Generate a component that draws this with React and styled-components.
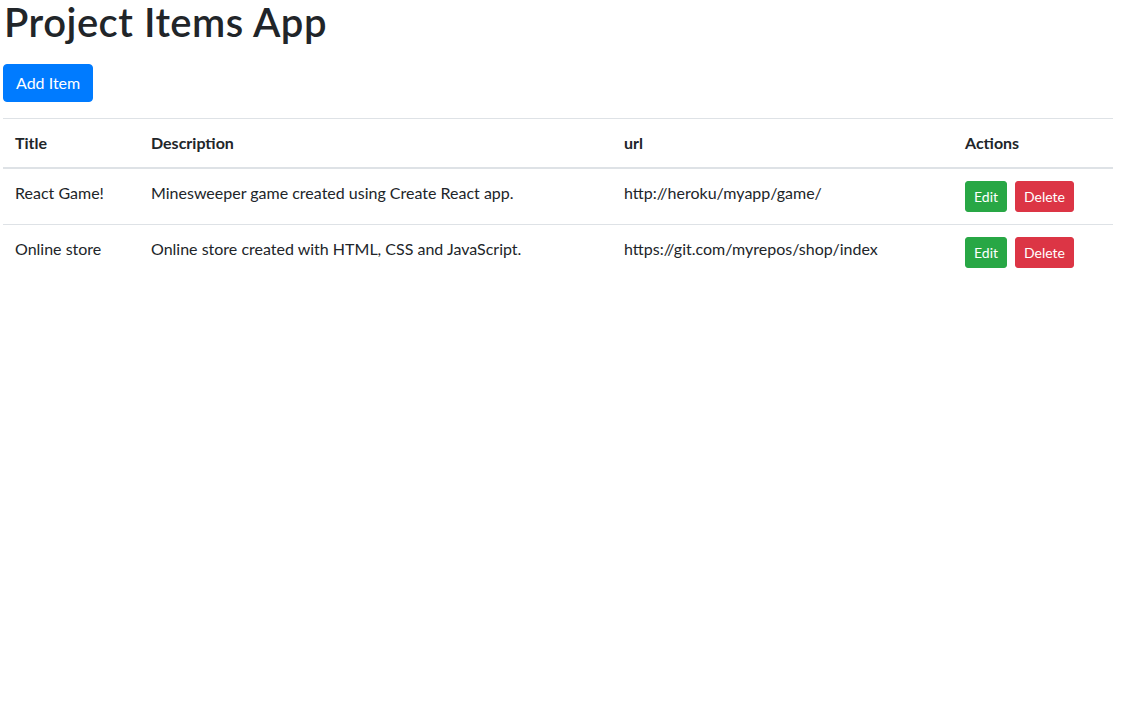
import React from "react";
import styled, { createGlobalStyle } from "styled-components";

const Global = createGlobalStyle`
  html, body { margin: 0; padding: 0; background: #fff; }
  body {
    font-family: Lato, "Segoe UI", "Noto Sans", "Liberation Sans", sans-serif;
    font-size: 16px;
    line-height: 1.5;
    color: #212529;
  }
  *, *::before, *::after { box-sizing: border-box; }
`;

const Page = styled.div`
  padding: 0 8px 0 3px;
`;

const Heading = styled.h1`
  margin: 0 0 20px 1px;
  font-size: 40px;
  font-weight: 600;
  line-height: 44px;
  letter-spacing: 0.5px;
`;

const Button = styled.button`
  display: inline-block;
  font-family: inherit;
  font-weight: 400;
  color: #fff;
  background: ${(p) => p.$bg};
  border: 1px solid ${(p) => p.$bg};
  border-radius: ${(p) => (p.$small ? "3px" : "4px")};
  padding: ${(p) => (p.$small ? "4px 8px" : "6px 12px")};
  font-size: ${(p) => (p.$small ? "14px" : "16px")};
  line-height: 1.5;
  cursor: pointer;
  margin-right: ${(p) => (p.$gap ? "8px" : "0")};
  vertical-align: middle;
`;

const Table = styled.table`
  width: 1110px;
  margin-top: 16px;
  border-collapse: collapse;
  color: #212529;
`;

const Th = styled.th`
  text-align: left;
  font-weight: 700;
  padding: 12px;
  vertical-align: bottom;
  border-top: 1px solid #dee2e6;
  border-bottom: 2px solid #dee2e6;
`;

const Td = styled.td`
  padding: 12px;
  vertical-align: top;
  border-top: 1px solid #dee2e6;
`;

const items = [
  {
    title: "React Game!",
    description: "Minesweeper game created using Create React app.",
    url: "http://heroku/myapp/game/",
  },
  {
    title: "Online store",
    description: "Online store created with HTML, CSS and JavaScript.",
    url: "https://git.com/myrepos/shop/index",
  },
];

export default function App() {
  return (
    <Page>
      <Global />
      <Heading>Project Items App</Heading>
      <Button $bg="#007bff">Add Item</Button>
      <Table>
        <colgroup>
          <col style={{ width: 136 }} />
          <col style={{ width: 473 }} />
          <col style={{ width: 341 }} />
          <col style={{ width: 160 }} />
        </colgroup>
        <thead>
          <tr>
            <Th>Title</Th>
            <Th>Description</Th>
            <Th>url</Th>
            <Th>Actions</Th>
          </tr>
        </thead>
        <tbody>
          {items.map((it) => (
            <tr key={it.title}>
              <Td>{it.title}</Td>
              <Td>{it.description}</Td>
              <Td>{it.url}</Td>
              <Td>
                <Button $small $gap $bg="#28a745">Edit</Button>
                <Button $small $bg="#dc3545">Delete</Button>
              </Td>
            </tr>
          ))}
        </tbody>
      </Table>
    </Page>
  );
}
